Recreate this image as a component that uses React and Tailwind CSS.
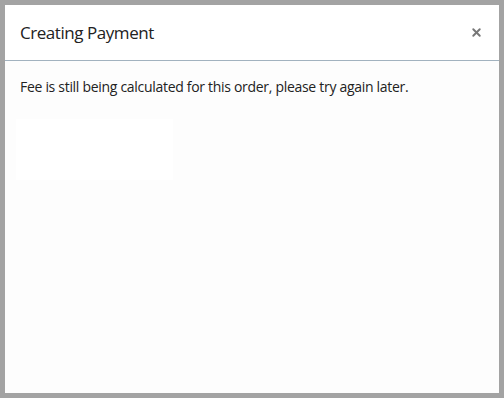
import { X } from 'lucide-react'

export default function App() {
  return (
    <div className="w-[504px] h-[398px] bg-[#a3a3a3] p-[5px]" style={{ fontFamily: '"Open Sans", sans-serif' }}>
      <div className="flex flex-col w-full h-full bg-[#fdfdfd]">
        <div className="flex items-center justify-between h-[56px] px-[15px] bg-white border-b border-[#a2b2bf]">
          <h4 className="text-[17px] tracking-[-0.45px] text-[#222] leading-none">Creating Payment</h4>
          <button className="mr-[1px] text-[#777]">
            <X className="w-[13px] h-[13px]" strokeWidth={3.5} />
          </button>
        </div>
        <div className="px-[15px] pt-[16px]">
          <p className="text-[14px] tracking-[-0.3px] text-[#222] leading-[20px]">
            Fee is still being calculated for this order, please try again later.
          </p>
          <div className="mt-[22px] -ml-[4px] w-[157px] h-[61px] bg-white"></div>
        </div>
      </div>
    </div>
  )
}
